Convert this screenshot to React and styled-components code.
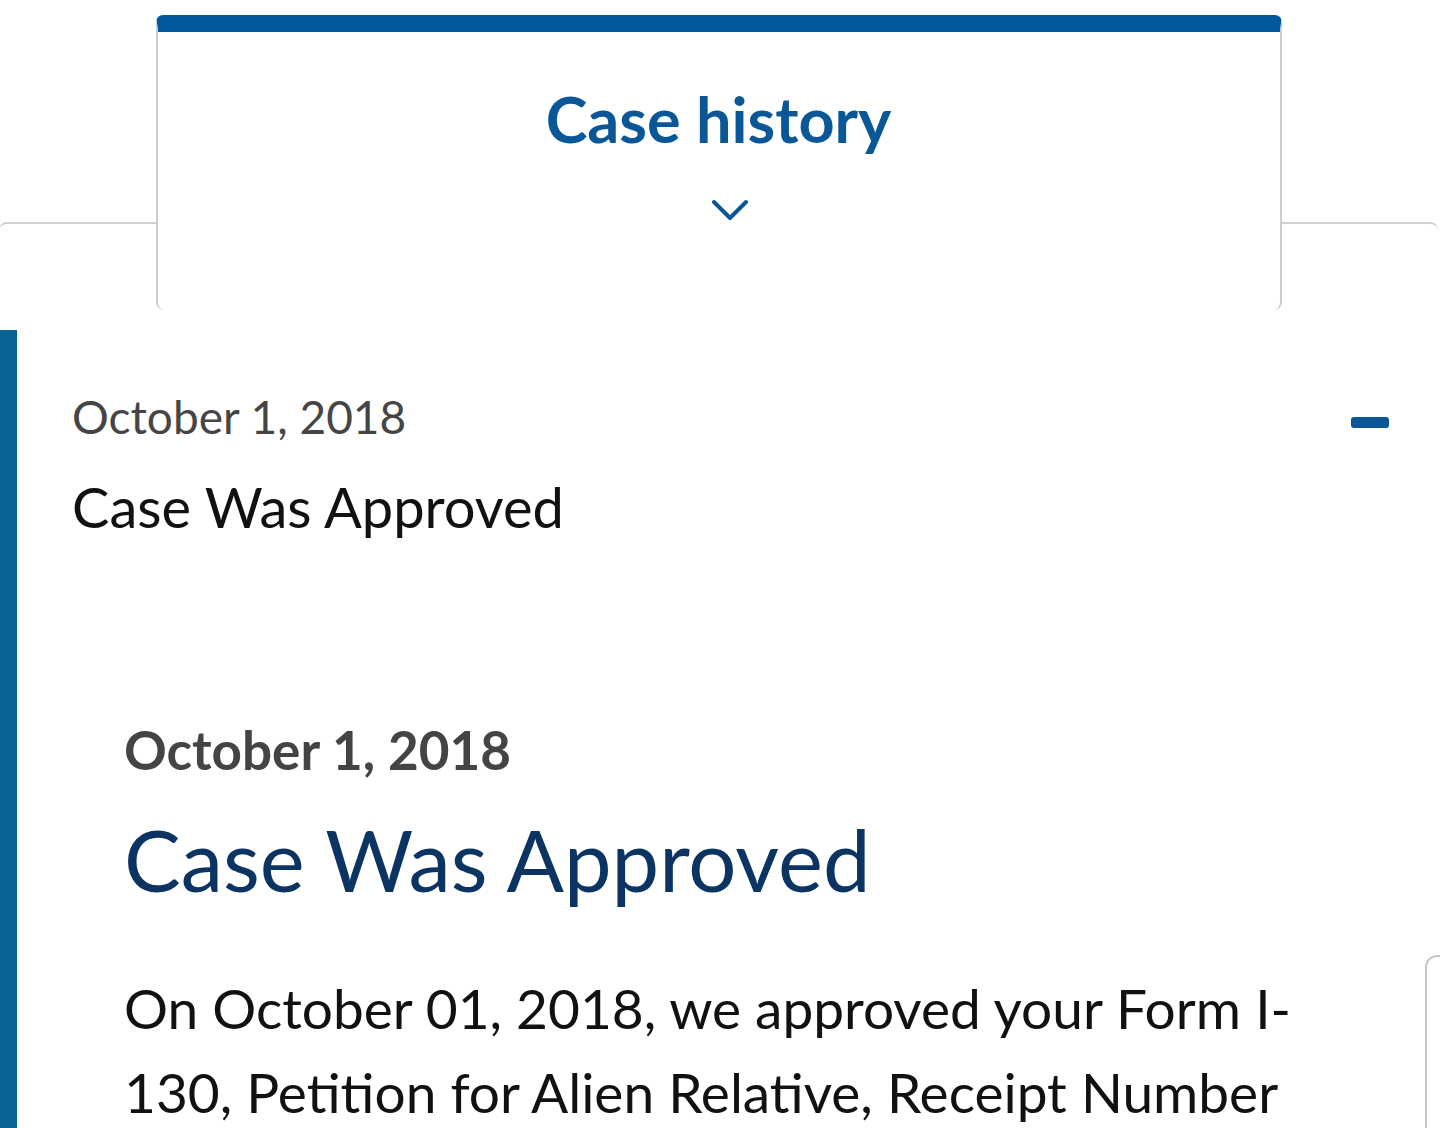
import React from 'react';
import styled, { createGlobalStyle } from 'styled-components';

const GlobalStyle = createGlobalStyle`
    body {
        margin: 0;
        background: #ffffff;
        font-family: Lato, "Open Sans", sans-serif;
        overflow: hidden;
    }
`;

const Page = styled.div`
    width: 1440px;
    height: 1128px;
    overflow: hidden;
`;

const TabRow = styled.div`
    display: flex;
    align-items: flex-start;
`;

const Side = styled.div`
    flex: 1;
    margin-top: 222px;
    height: 20px;
    border-top: 2px solid #cfcfcf;
    border-top-left-radius: ${(p) => (p.left ? '8px' : '0')};
    border-top-right-radius: ${(p) => (p.left ? '0' : '8px')};
    margin-left: ${(p) => (p.left ? '-1px' : '0')};
    margin-right: ${(p) => (p.left ? '0' : '2px')};
`;

const Tab = styled.div`
    width: 1126px;
    height: 295px;
    margin-top: 15px;
    box-sizing: border-box;
    border-top: 17px solid #03579b;
    border-left: 2px solid #cccccc;
    border-right: 2px solid #cccccc;
    border-radius: 7px 7px 8px 8px;
    display: flex;
    flex-direction: column;
    align-items: center;
    padding-top: 52px;
`;

const TabTitle = styled.div`
    font-size: 63px;
    font-weight: 700;
    color: #0a5798;
    line-height: 70px;
`;

const Chevron = styled.svg`
    margin-top: 45px;
    margin-left: 23px;
    width: 36px;
    height: 22px;
`;

const Entry = styled.section`
    margin-top: 20px;
    border-left: 17px solid #0a6394;
    height: 800px;
    box-sizing: border-box;
`;

const EntryHeader = styled.div`
    display: flex;
    justify-content: space-between;
    align-items: flex-start;
    padding: 60px 51px 0 55px;
`;

const HeaderText = styled.div`
    display: flex;
    flex-direction: column;
`;

const SmallDate = styled.div`
    font-size: 46px;
    line-height: 54px;
    color: #454545;
`;

const SmallStatus = styled.div`
    margin-top: 33px;
    font-size: 56px;
    line-height: 60px;
    color: #111111;
`;

const Minus = styled.div`
    width: 38px;
    height: 11px;
    border-radius: 3px;
    background: #0a5798;
    margin-top: 27px;
`;

const Body = styled.div`
    display: grid;
    grid-template-columns: 1fr 15px;
    padding-left: 107px;
    margin-top: 182px;
`;

const Detail = styled.div`
    display: flex;
    flex-direction: column;
    width: 1180px;
`;

const BigDate = styled.div`
    font-size: 53px;
    font-weight: 700;
    line-height: 62px;
    color: #444444;
`;

const BigStatus = styled.h2`
    margin: 31px 0 0;
    font-size: 85px;
    font-weight: 400;
    line-height: 94px;
    color: #0b3463;
`;

const Paragraph = styled.p`
    margin: 60px 0 0;
    font-size: 55px;
    line-height: 84px;
    color: #111111;
`;

const PeekCard = styled.div`
    margin-top: 236px;
    height: 400px;
    border-left: 2px solid #c8c8c8;
    border-top: 2px solid #c8c8c8;
    border-top-left-radius: 12px;
`;

const App = () => {
    return (
        <Page>
            <GlobalStyle />
            <TabRow>
                <Side left />
                <Tab>
                    <TabTitle>Case history</TabTitle>
                    <Chevron viewBox="0 0 36 22">
                        <path
                            d="M2 3 L18 19 L34 3"
                            fill="none"
                            stroke="#0a5798"
                            strokeWidth="4"
                            strokeLinecap="round"
                            strokeLinejoin="round"
                        />
                    </Chevron>
                </Tab>
                <Side />
            </TabRow>
            <Entry>
                <EntryHeader>
                    <HeaderText>
                        <SmallDate>October 1, 2018</SmallDate>
                        <SmallStatus>Case Was Approved</SmallStatus>
                    </HeaderText>
                    <Minus />
                </EntryHeader>
                <Body>
                    <Detail>
                        <BigDate>October 1, 2018</BigDate>
                        <BigStatus>Case Was Approved</BigStatus>
                        <Paragraph>
                            On October 01, 2018, we approved your Form I-130,
                            Petition for Alien Relative, Receipt Number
                        </Paragraph>
                    </Detail>
                    <PeekCard />
                </Body>
            </Entry>
        </Page>
    );
};

export default App;
